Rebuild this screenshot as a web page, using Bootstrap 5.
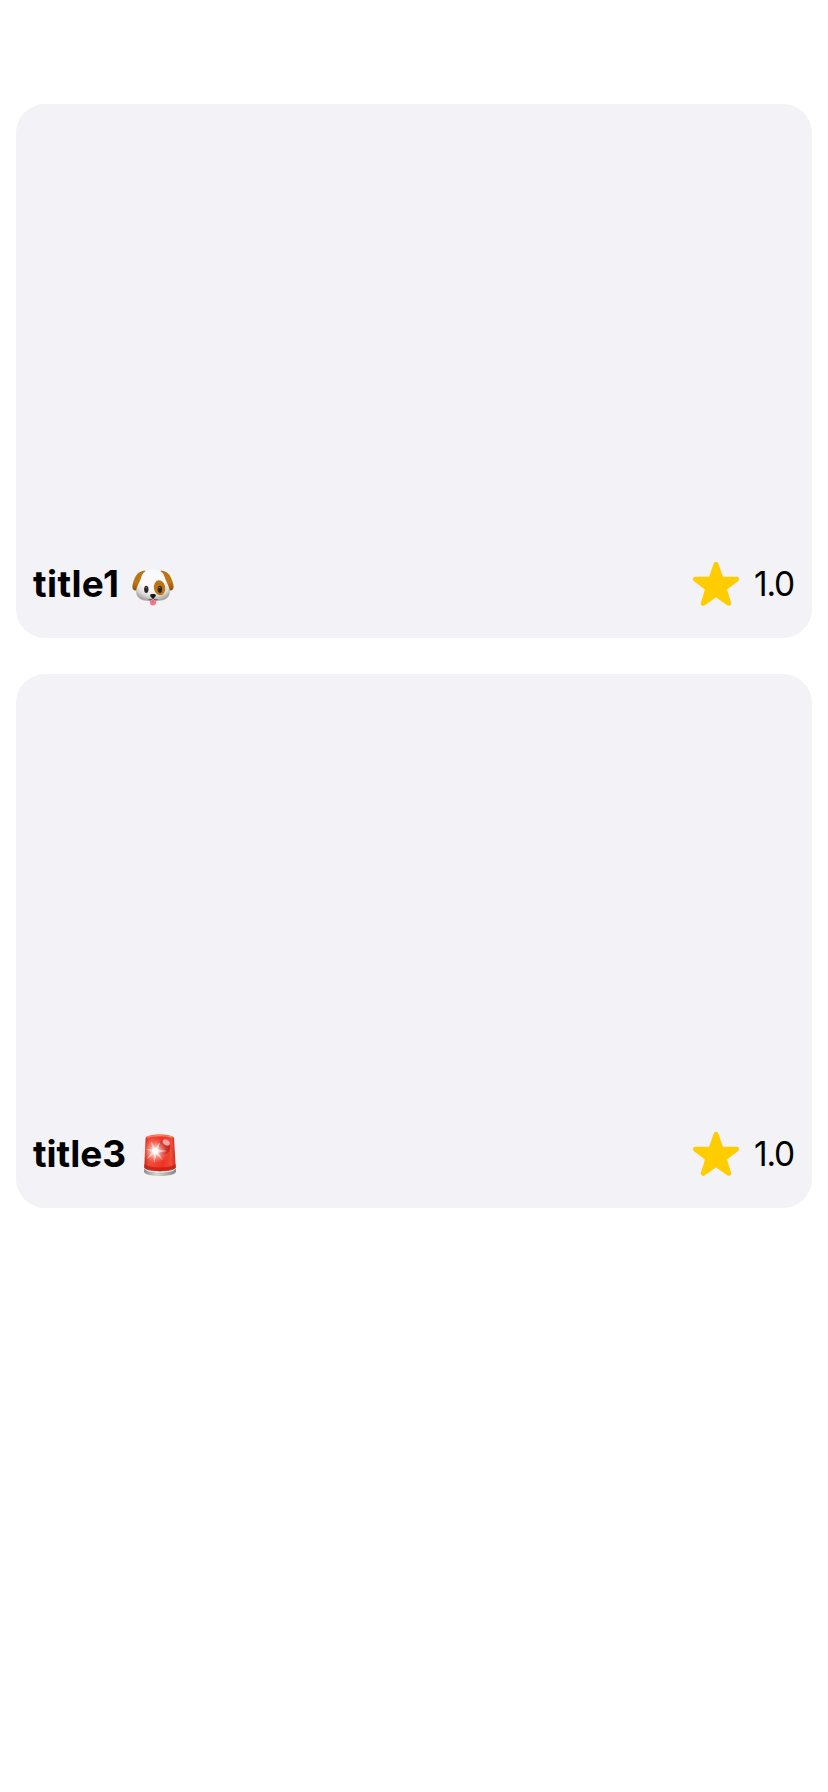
<!DOCTYPE html>
<html lang="en">
<head>
<meta charset="utf-8">
<meta name="viewport" content="width=device-width, initial-scale=1">
<title>Titles</title>
<link href="https://cdn.jsdelivr.net/npm/bootstrap@5.3.0/dist/css/bootstrap.min.css" rel="stylesheet">
<style>
  body { font-family: Inter, "Liberation Sans", sans-serif; color: #000; background: #fff; }
  .feed { padding: 104px 16px 0; gap: 36px; }
  .tile { height: 534px; border-radius: 29px; background: #f2f2f7; border: 0; color: #000; }
  .tile-foot { height: 44px; margin: 0 18px 32px 17px; }
  .tile-title { font-size: 37px; line-height: 44px; font-weight: 700; letter-spacing: 0; width: 85px; white-space: nowrap; }
  .title-narrow { letter-spacing: .4px; }
  .title-wide { width: 93px; }
  .score { font-size: 33.5px; line-height: 44px; letter-spacing: -1.2px; width: 40px; white-space: nowrap; }
  .star { margin-right: 14px; }
  .dog { margin: 7px 0 0 14px; }
  .siren { margin: 1px 0 0 17px; }
  svg { display: block; overflow: visible; flex: none; }
</style>
</head>
<body>
<svg width="0" height="0" class="position-absolute" aria-hidden="true">
  <defs>
    <symbol id="star" viewBox="0 0 48 46" overflow="visible">
      <path d="M24 3.1 29.2 17.8 44.8 18.1 32.4 27.7 36.9 42.5 24 33.6 11.1 42.5 15.6 27.7 3.2 18.1 18.8 17.8Z" fill="#fc0" stroke="#fc0" stroke-width="4.6" stroke-linejoin="round"/>
    </symbol>
    <radialGradient id="fur" cx=".5" cy=".3" r=".7"><stop offset=".5" stop-color="#fafafa"/><stop offset=".8" stop-color="#dedcda"/><stop offset="1" stop-color="#aaa5a0"/></radialGradient>
    <linearGradient id="ear" x2="0" y2="1"><stop stop-color="#b8731b"/><stop offset=".6" stop-color="#bf7610"/><stop offset="1" stop-color="#8b4f0b"/></linearGradient>
    <linearGradient id="glass"><stop stop-color="#c92a1d"/><stop offset=".15" stop-color="#f24b3a"/><stop offset=".6" stop-color="#ee3324"/><stop offset=".86" stop-color="#f04b37"/><stop offset="1" stop-color="#c82b1c"/></linearGradient>
    <linearGradient id="metal"><stop stop-color="#8c8c8a"/><stop offset=".4" stop-color="#d6d6d3"/><stop offset="1" stop-color="#858582"/></linearGradient>
    <radialGradient id="flare"><stop stop-color="#fff"/><stop offset=".3" stop-color="#ffe9e4" stop-opacity=".9"/><stop offset="1" stop-color="#ff8f7c" stop-opacity="0"/></radialGradient>
  </defs>
</svg>
<main class="feed d-flex flex-column">
  <article class="tile card">
    <div class="tile-foot mt-auto d-flex align-items-center">
      <h2 class="tile-title title-narrow mb-0">title1</h2>
      <svg class="dog" width="42" height="38" viewBox="0 0 42 38" role="img" aria-label="Dog">
        <path d="M13 1.500C6 2 3 7 1 14c-2 6 1 9 5 7 4-2 7-7 9-15ZM29 1.500c7 .5 10 5.500 12 12.500 2 6-1 9-5 7-4-2-7-7-9-15Z" fill="url(#ear)"/>
        <path d="M21 .7C14 .7 10.500 3 9 9 7.500 14 4.400 17 4.200 22.500 4 29 10 32 16 31.700h10c6 .3 12-2.700 11.800-9.200-.2-5.500-3.300-8.500-4.800-13.500C31.500 3 28 .7 21 .7Z" fill="url(#fur)"/>
        <ellipse cx="27.600" cy="18.800" rx="5.700" ry="7.500" transform="rotate(-8 27.600 18.800)" fill="#bd7414"/>
        <ellipse cx="14.300" cy="20.300" rx="2.200" ry="3.600" fill="#292827"/><ellipse cx="27.900" cy="20.300" rx="2.200" ry="3.600" fill="#292827"/>
        <circle cx="14.200" cy="18.600" r=".7" fill="#999"/><circle cx="27.800" cy="18.600" r=".7" fill="#999"/>
        <path d="M17.800 31.200c1.100.5 2.100-.2 3.200-.8 1.100.6 2.100 1.300 3.200.8v2.200c0 4-6.400 4-6.400 0Z" fill="#f77b90"/>
        <path d="M21 31v3.500" stroke="#d95873" stroke-width=".8"/>
        <path d="M16.500 30.600c2 .6 3.700 0 4.500-1.500.8 1.500 2.500 2.100 4.500 1.500M21 28v2" fill="none" stroke="#59514d" stroke-width="1"/>
        <path d="M18.100 26c0-1.500 5.800-1.500 5.800 0 0 1.500-1.800 3.300-2.900 3.300S18.100 27.500 18.100 26Z" fill="#171515"/>
      </svg>
      <svg class="star ms-auto" width="48" height="46"><use href="#star"/></svg>
      <span class="score">1.0</span>
    </div>
  </article>
  <article class="tile card">
    <div class="tile-foot mt-auto d-flex align-items-center">
      <h2 class="tile-title title-wide mb-0">title3</h2>
      <svg class="siren" width="34" height="44" viewBox="0 0 34 44" role="img" aria-label="Siren">
        <path d="M1 34v4.500c0 6 32 6 32 0V34Z" fill="url(#metal)"/>
        <path d="M1 34.500c0 6 32 6 32 0" fill="none" stroke="#eee" stroke-width="1"/>
        <path d="M2.600 5C3 .2 30.500.2 31 5l1.700 29c-1 5.500-30.500 5.500-31.400 0Z" fill="url(#glass)"/>
        <path d="M1.500 31c4 4.500 27 4.500 31 0l.2 3c-1 5.500-30.500 5.500-31.400 0Z" fill="#bd1d12" opacity=".75"/>
        <path d="M4 4.500c3-2.500 22-2.500 25.500 0" fill="none" stroke="#ff9a80" stroke-width="1.300" opacity=".8"/>
        <path d="M15 9c8-3 13 1 12 6-1 7-7 8-10 6Z" fill="#b91e18" opacity=".75"/>
        <ellipse cx="23.200" cy="9.500" rx="3.900" ry="2.600" transform="rotate(35 23.200 9.500)" fill="#f3a6a4"/>
        <circle cx="12.500" cy="18" r="13" fill="url(#flare)" opacity=".8"/>
        <path d="m8 8 4.300 7L17 9l-2 7.500 9 1.500-9 1.600 5 8-6.500-5.800L11 30l-.5-8.500L4 26l4.600-7L3 16l6.500.4Z" fill="#fff3ef" opacity=".6"/>
        <circle cx="12.300" cy="18" r="3.200" fill="#fff"/>
      </svg>
      <svg class="star ms-auto" width="48" height="46"><use href="#star"/></svg>
      <span class="score">1.0</span>
    </div>
  </article>
</main>
<script src="https://cdn.jsdelivr.net/npm/bootstrap@5.3.0/dist/js/bootstrap.bundle.min.js"></script>
</body>
</html>
